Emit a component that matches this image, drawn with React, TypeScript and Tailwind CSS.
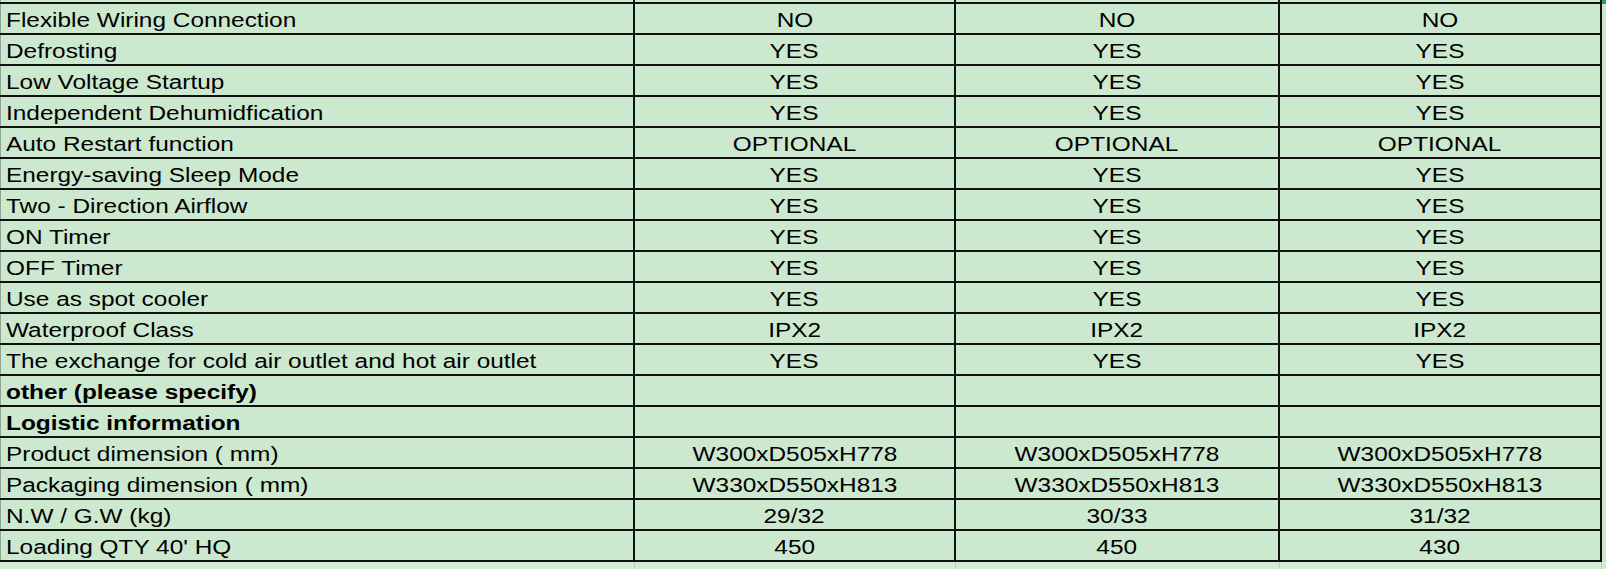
import React from "react";

type Row = { label: string; values: string[]; bold?: boolean };

const ROWS: Row[] = [
  { label: "Flexible Wiring Connection", values: ["NO", "NO", "NO"] },
  { label: "Defrosting", values: ["YES", "YES", "YES"] },
  { label: "Low Voltage Startup", values: ["YES", "YES", "YES"] },
  { label: "Independent Dehumidfication", values: ["YES", "YES", "YES"] },
  { label: "Auto Restart function", values: ["OPTIONAL", "OPTIONAL", "OPTIONAL"] },
  { label: "Energy-saving Sleep Mode", values: ["YES", "YES", "YES"] },
  { label: "Two - Direction Airflow", values: ["YES", "YES", "YES"] },
  { label: "ON Timer", values: ["YES", "YES", "YES"] },
  { label: "OFF Timer", values: ["YES", "YES", "YES"] },
  { label: "Use as spot cooler", values: ["YES", "YES", "YES"] },
  { label: "Waterproof Class", values: ["IPX2", "IPX2", "IPX2"] },
  { label: "The exchange for cold air outlet and hot air outlet", values: ["YES", "YES", "YES"] },
  { label: "other (please specify)", values: ["", "", ""], bold: true },
  { label: "Logistic information", values: ["", "", ""], bold: true },
  { label: "Product dimension ( mm)", values: ["W300xD505xH778", "W300xD505xH778", "W300xD505xH778"] },
  { label: "Packaging dimension ( mm)", values: ["W330xD550xH813", "W330xD550xH813", "W330xD550xH813"] },
  { label: "N.W / G.W (kg)", values: ["29/32", "30/33", "31/32"] },
  { label: "Loading QTY 40' HQ", values: ["450", "450", "430"] },
];

// value columns, widths include the 2px right rule
const COLS = ["w-[321px]", "w-[324px]", "w-[322px]"];

function TableRow({ row }: { row: Row }) {
  return (
    <div className="flex h-[31px] w-[1602px] border-b-2 border-[#111]">
      <div className="w-[635px] shrink-0 border-l border-r-2 border-l-[#8fa393] border-r-[#111] pl-[5px] pt-[2px] leading-[29px] whitespace-nowrap">
        <span className={"inline-block origin-left scale-x-[1.22] " + (row.bold ? "font-bold" : "")}>{row.label}</span>
      </div>
      {row.values.map((v, i) => (
        <div
          key={i}
          className={COLS[i] + " shrink-0 border-r-2 border-[#111] pt-[2px] text-center leading-[29px] whitespace-nowrap"}
        >
          <span className="inline-block origin-center scale-x-[1.22]">{v}</span>
        </div>
      ))}
    </div>
  );
}

export default function App() {
  return (
    <div className="relative h-[569px] w-[1606px] overflow-hidden bg-[#d4ebd7] font-['Liberation_Sans',Arial,sans-serif] text-[20px] text-black">
      <div className="bg-[#cce8cf]">
        {/* top rule of the sheet; the row above is scrolled out of view */}
        <div className="flex h-[4px] w-[1602px] border-b-2 border-[#111]">
          <div className="w-[635px] shrink-0 border-l border-r-2 border-l-[#8fa393] border-r-[#111]" />
          <div className="w-[321px] shrink-0 border-r-2 border-[#111]" />
          <div className="w-[324px] shrink-0 border-r-2 border-[#111]" />
          <div className="w-[322px] shrink-0 border-r-2 border-[#111]" />
        </div>
        {ROWS.map((r) => (
          <TableRow key={r.label} row={r} />
        ))}
      </div>

      {/* faint sheet gridlines below the table */}
      <div className="flex h-[7px] w-[1602px]">
        <div className="w-[635px] shrink-0 border-r border-[#b9cdbc]" />
        <div className="w-[321px] shrink-0 border-r border-[#b9cdbc]" />
        <div className="w-[324px] shrink-0 border-r border-[#b9cdbc]" />
        <div className="w-[322px] shrink-0 border-r border-[#b9cdbc]" />
      </div>

      {/* selection handle */}
      <div className="absolute right-0 top-0 h-[4px] w-[4px] bg-[#21a366]" />
    </div>
  );
}
